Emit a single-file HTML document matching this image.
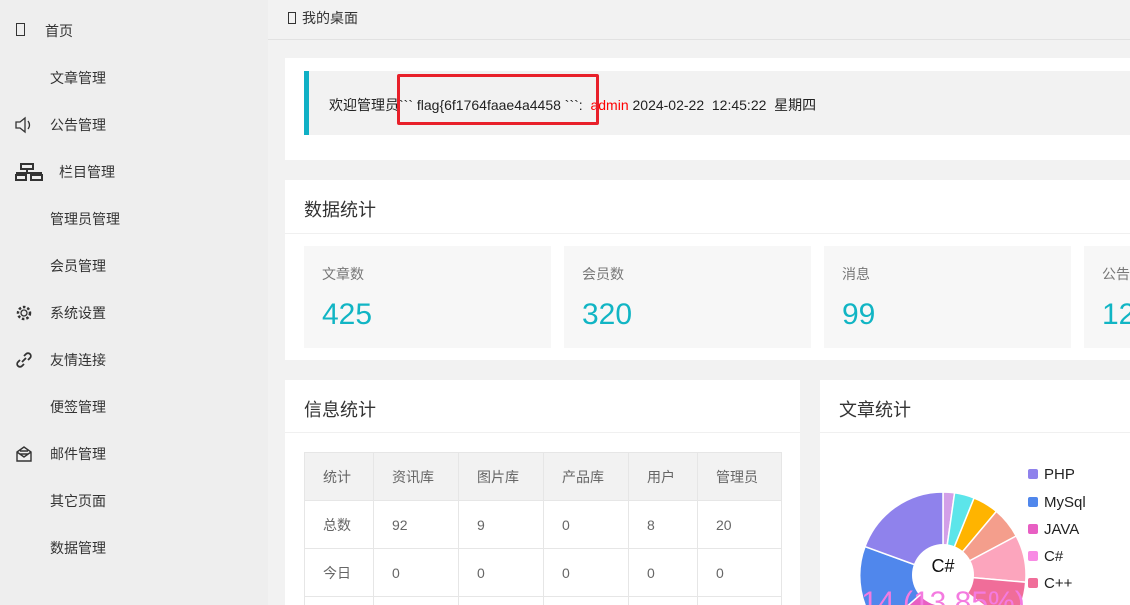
<!DOCTYPE html>
<html style="width:1130px;height:605px;overflow:hidden"><head><meta charset="utf-8"><style>
*{margin:0;padding:0;box-sizing:border-box}
body{width:1130px;height:605px;overflow:hidden;background:#f2f2f2;font-family:"Liberation Sans","Noto Sans CJK SC",sans-serif;color:#333;position:relative;font-size:14px}
span,div{white-space:nowrap}
.side{position:absolute;left:0;top:0;width:268px;height:605px;background:#eee}
.it{position:absolute;left:0;width:268px;height:20px;line-height:20px;font-size:14px;color:#333}
.ic{position:absolute;left:15px;top:1px}
.top{position:absolute;left:268px;top:0;width:862px;height:40px;border-bottom:1px solid #e2e2e2;background:#f2f2f2}
.tt{position:absolute;left:20px;top:8px;font-size:14px}
.tb{display:inline-block;width:8px;height:12px;border:1.2px solid #333;margin-right:6px;vertical-align:-1px}
.card{position:absolute;background:#fff;overflow:hidden}
.hd{position:absolute;left:19px;top:16px;font-size:18px;color:#333}
.hr{position:absolute;left:0;right:0;height:1px;background:#f0f0f0}
.box{position:absolute;top:66px;width:247px;height:102px;background:#f7f7f7}
.box .l{position:absolute;left:18px;top:18px;font-size:14px;color:#777}
.box .n{position:absolute;left:18px;top:52px;font-size:30px;color:#11b5c4}
table{position:absolute;left:19px;top:72px;border-collapse:collapse;font-size:14px;color:#666}
td{border:1px solid #e6e6e6;height:48px;padding-left:18px;text-align:left}
tr.h td{background:#f2f2f2}
</style></head><body>
<div class="side">
<div class="it" style="top:21px"><span class="ic" style="left:16px;top:2px;width:9px;height:13px;border:1.3px solid #333"></span><span style="position:absolute;left:45px">首页</span></div>
<div class="it" style="top:68px"><span style="position:absolute;left:50px">文章管理</span></div>
<div class="it" style="top:115px"><svg class="ic" style="left:14px" width="20" height="18" viewBox="0 0 20 18"><path d="M2 6h4l5-4v14l-5-4H2z M14 5q3 4 0 8" fill="none" stroke="#333" stroke-width="1.3"/></svg><span style="position:absolute;left:50px">公告管理</span></div>
<div class="it" style="top:162px"><svg class="ic" width="28" height="18" viewBox="0 0 28 18"><rect x="6" y="1" width="12" height="5" fill="none" stroke="#333" stroke-width="2"/><path d="M12 6v3M1 10h26M3 10v3M21 10v3" stroke="#333" stroke-width="2"/><rect x="1" y="12" width="10" height="5" fill="none" stroke="#333" stroke-width="2"/><rect x="16" y="12" width="11" height="5" fill="none" stroke="#333" stroke-width="2"/></svg><span style="position:absolute;left:59px">栏目管理</span></div>
<div class="it" style="top:209px"><span style="position:absolute;left:50px">管理员管理</span></div>
<div class="it" style="top:256px"><span style="position:absolute;left:50px">会员管理</span></div>
<div class="it" style="top:303px"><svg class="ic" width="18" height="18" viewBox="0 0 18 18"><circle cx="9" cy="9" r="6" fill="none" stroke="#333" stroke-width="2.5" stroke-dasharray="2.5 2"/><circle cx="9" cy="9" r="3" fill="none" stroke="#333" stroke-width="1.3"/></svg><span style="position:absolute;left:50px">系统设置</span></div>
<div class="it" style="top:350px"><svg class="ic" width="18" height="18" viewBox="0 0 18 18"><path d="M7 11l4-4M5 9l-2 2a2.5 2.5 0 0 0 4 4l2-2M13 9l2-2a2.5 2.5 0 0 0-4-4l-2 2" fill="none" stroke="#333" stroke-width="1.8"/></svg><span style="position:absolute;left:50px">友情连接</span></div>
<div class="it" style="top:397px"><span style="position:absolute;left:50px">便签管理</span></div>
<div class="it" style="top:444px"><svg class="ic" width="18" height="18" viewBox="0 0 18 18"><path d="M2 7l7-5 7 5v9H2z M2 7l7 5 7-5 M5 6h8M5 9h8" fill="none" stroke="#333" stroke-width="1.4"/></svg><span style="position:absolute;left:50px">邮件管理</span></div>
<div class="it" style="top:491px"><span style="position:absolute;left:50px">其它页面</span></div>
<div class="it" style="top:538px"><span style="position:absolute;left:50px">数据管理</span></div>
</div>
<div class="top"><div class="tt"><i class="tb"></i>我的桌面</div></div>

<div class="card" style="left:285px;top:58px;width:845px;height:102px">
<div style="position:absolute;left:19px;top:13px;right:0;height:64px;background:#f2f2f2;border-left:5px solid #0fb0c5">
<div style="position:absolute;left:20px;top:24px;font-size:14px;color:#222">欢迎管理员&#96;&#96;&#96; flag{6f1764faae4a4458 &#96;&#96;&#96;:&nbsp;&nbsp;<span style="color:#f00">admin</span> 2024-02-22&nbsp;&nbsp;12:45:22&nbsp;&nbsp;星期四</div>
</div>
<div style="position:absolute;left:112px;top:16px;width:202px;height:51px;border:3px solid #e8202a;border-radius:2px"></div>
</div>

<div class="card" style="left:285px;top:180px;width:845px;height:180px">
<div class="hd">数据统计</div><div class="hr" style="top:53px"></div>
<div class="box" style="left:19px"><div class="l">文章数</div><div class="n">425</div></div>
<div class="box" style="left:279px"><div class="l">会员数</div><div class="n">320</div></div>
<div class="box" style="left:539px"><div class="l">消息</div><div class="n">99</div></div>
<div class="box" style="left:799px"><div class="l">公告</div><div class="n">12</div></div>
</div>

<div class="card" style="left:285px;top:380px;width:515px;height:225px">
<div class="hd">信息统计</div><div class="hr" style="top:52px"></div>
<table>
<tr class="h"><td style="width:69px">统计</td><td style="width:85px">资讯库</td><td style="width:85px">图片库</td><td style="width:85px">产品库</td><td style="width:69px">用户</td><td style="width:84px">管理员</td></tr>
<tr><td>总数</td><td>92</td><td>9</td><td>0</td><td>8</td><td>20</td></tr>
<tr><td>今日</td><td>0</td><td>0</td><td>0</td><td>0</td><td>0</td></tr>
<tr><td>&nbsp;</td><td></td><td></td><td></td><td></td><td></td></tr>
</table>
</div>

<div class="card" style="left:820px;top:380px;width:310px;height:225px">
<div class="hd">文章统计</div><div class="hr" style="top:52px"></div>
<svg style="position:absolute;left:0;top:60px;overflow:hidden" width="310" height="165" viewBox="820 440 310 165">
<g stroke="#fff" stroke-width="1.5">
<path d="M943 575 L943 492 A83 83 0 0 1 954.6 492.8Z" fill="#d39fe8"/>
<path d="M943 575 L954.6 492.8 A83 83 0 0 1 974.1 498Z" fill="#5ce5ea"/>
<path d="M943 575 L974.1 498 A83 83 0 0 1 996.4 511.4Z" fill="#ffb400"/>
<path d="M943 575 L996.4 511.4 A83 83 0 0 1 1016.2 536Z" fill="#f49e8c"/>
<path d="M943 575 L1016.2 536 A83 83 0 0 1 1025.7 582.2Z" fill="#fca5bd"/>
<path d="M943 575 L1025.7 582.2 A83 83 0 0 1 1010 625Z" fill="#f06d99"/>
<path d="M943 575 L880 630 A83 83 0 0 1 865 546.6Z" fill="#5087ec"/>
<path d="M943 575 L865 546.6 A83 83 0 0 1 943 492Z" fill="#8f82ec"/>
<path d="M943 575 L943 660 A83 83 0 0 1 880 630Z" fill="#e85fc3"/>
</g>
<circle cx="943" cy="575" r="31" fill="#fff"/>
<text x="943" y="572" text-anchor="middle" font-size="18" font-family="Liberation Sans" fill="#111">C#</text>
<text x="943" y="612" text-anchor="middle" font-size="30" font-family="Liberation Sans" fill="#f47be0">14 (13.85%)</text>
<g font-family="Liberation Sans" font-size="15" fill="#222">
<rect x="1028" y="469" width="10" height="10" rx="2" fill="#8f82ec"/><text x="1044" y="479">PHP</text>
<rect x="1028" y="497" width="10" height="10" rx="2" fill="#5087ec"/><text x="1044" y="507">MySql</text>
<rect x="1028" y="524" width="10" height="10" rx="2" fill="#e85fc3"/><text x="1044" y="534">JAVA</text>
<rect x="1028" y="551" width="10" height="10" rx="2" fill="#f88be4"/><text x="1044" y="561">C#</text>
<rect x="1028" y="578" width="10" height="10" rx="2" fill="#f06d99"/><text x="1044" y="588">C++</text>
</g>
</svg>
</div>
</body></html>
